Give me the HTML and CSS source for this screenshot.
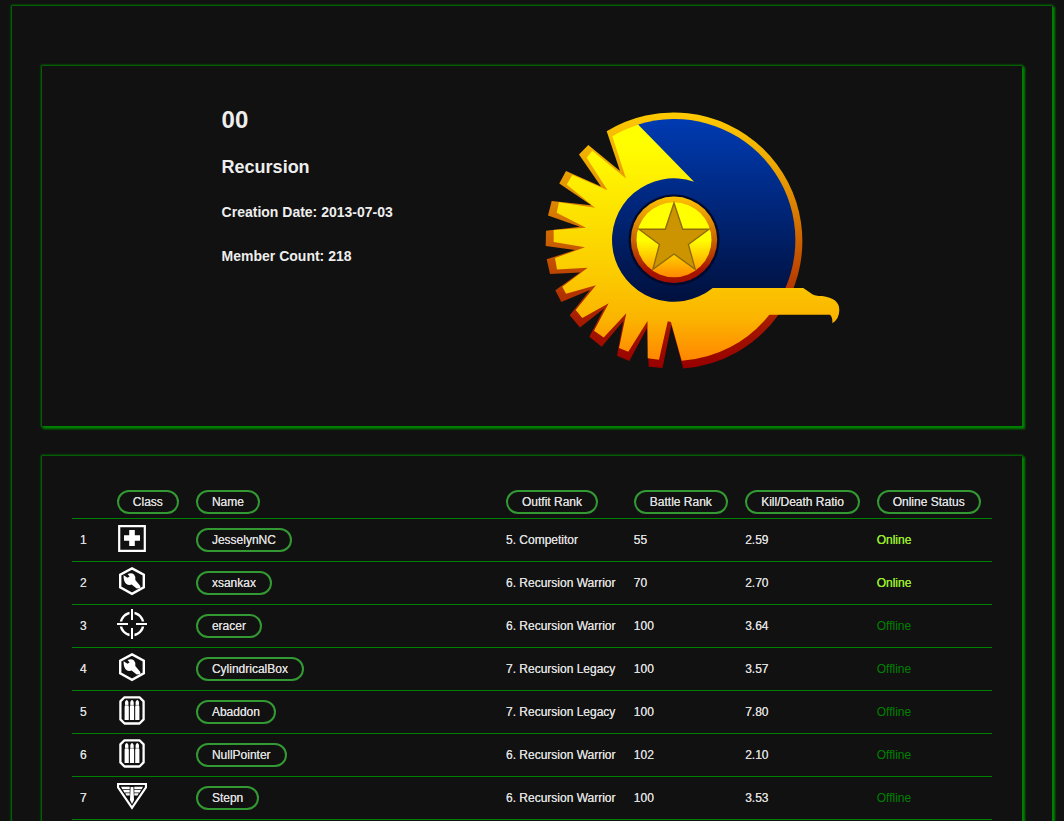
FILE: index.html
```html
<!DOCTYPE html>
<html lang="en">
<head>
<meta charset="utf-8">
<title>Recursion</title>
<link rel="stylesheet" href="styles.css">
</head>
<body>
<svg class="sprites" aria-hidden="true">
  <symbol id="medic" viewBox="0 0 30 30"><path d="M2.2 3.2H27.8V27.8H2.2Z" fill="none" stroke="#fff" stroke-width="2.2"/><path d="M12.2 7H17.8V12.2H23V17.8H17.8V23H12.2V17.8H7V12.2H12.2Z" fill="#fff"/></symbol>
  <symbol id="engineer" viewBox="0 0 30 30"><path d="M15 2.4L26.8 8.7V21.3L15 27.8L3.2 21.3V8.7Z" fill="none" stroke="#fff" stroke-width="2.4"/><path d="M6.6 9.2L10.5 11.8L12.6 10.6L10.6 8Q14.5 6.4 17 8.4Q19 10.6 18.3 14L23.3 20V22.2L19.7 22.6L14.6 18.6Q11.5 19.6 8.8 17.4Q6.4 15 6.6 9.2Z" fill="#fff"/></symbol>
  <symbol id="infiltrator" viewBox="0 0 30 30"><circle cx="15" cy="15" r="11.3" fill="none" stroke="#fff" stroke-width="2.4"/><path d="M15 0V11M15 19V30M0 15H11M19 15H30" stroke="#111" stroke-width="5"/><path d="M15 0V11M15 19V30M0 15H11M19 15H30" stroke="#fff" stroke-width="2"/></symbol>
  <symbol id="heavy" viewBox="0 0 30 30"><path d="M7.5 2.3H22.5L26.6 6.4V24.4L22.5 28.5H7.5L3.4 24.4V6.4Z" fill="none" stroke="#fff" stroke-width="2.3" stroke-linejoin="round"/><path d="M8 10V7Q9.7 3 11.4 7V10L11.8 12V25H7.6V12ZM13.3 10V7Q15 3 16.7 7V10L17.1 12V25H12.9V12ZM18.6 10V7Q20.3 3 22 7V10L22.4 12V25H18.2V12Z" fill="#fff"/><path d="M7 10.3H23" stroke="#111" stroke-opacity=".4"/></symbol>
  <symbol id="light" viewBox="0 0 30 30"><path d="M1 3H29V6.3L15 26.8L1 6.3Z" fill="none" stroke="#fff" stroke-width="2.2"/><path d="M13.6 6H16.4L17 19L15 23L13 19ZM4 5.8H12.7V8.2H5.3ZM6 9H12.7V11.4H7.3ZM8.2 12.2H12.7V14.6H9.5ZM26 5.8H17.3V8.2H24.7ZM24 9H17.3V11.4H22.7ZM21.8 12.2H17.3V14.6H20.5Z" fill="#fff"/></symbol>
</svg>
<main class="page">
  <section class="panel outfit">
    <div class="facts">
      <h1>00</h1>
      <h2>Recursion</h2>
      <h3>Creation Date: 2013-07-03</h3>
      <h3>Member Count: 218</h3>
    </div>
    <svg class="emblem" viewBox="542 96 300 300" role="img" aria-label="New Conglomerate emblem">
      <defs>
        <linearGradient id="rim" gradientUnits="userSpaceOnUse" x1="0" y1="111" x2="0" y2="368"><stop offset="0" stop-color="#fc0"/><stop offset=".22" stop-color="#eda500"/><stop offset=".5" stop-color="#cc6200"/><stop offset=".85" stop-color="#a21400"/><stop offset="1" stop-color="#980000"/></linearGradient>
        <linearGradient id="gold" gradientUnits="userSpaceOnUse" x1="0" y1="140" x2="0" y2="362"><stop offset="0" stop-color="#ff0"/><stop offset=".6" stop-color="#fbcb00"/><stop offset=".8" stop-color="#fbb500"/><stop offset="1" stop-color="#ff8500"/></linearGradient>
        <linearGradient id="blue" gradientUnits="userSpaceOnUse" x1="0" y1="118" x2="0" y2="302"><stop offset="0" stop-color="#003bb3"/><stop offset="1" stop-color="#00103d"/></linearGradient>
        <linearGradient id="hub" gradientUnits="userSpaceOnUse" x1="0" y1="196" x2="0" y2="283"><stop offset="0" stop-color="#ffc400"/><stop offset=".5" stop-color="#cc6600"/><stop offset=".85" stop-color="#aa1400"/><stop offset="1" stop-color="#a01000"/></linearGradient>
        <linearGradient id="disc" gradientUnits="userSpaceOnUse" x1="0" y1="202" x2="0" y2="278"><stop offset="0" stop-color="#ff0"/><stop offset=".5" stop-color="#ff0"/><stop offset="1" stop-color="#ff8500"/></linearGradient>
      </defs>
      <path fill="url(#rim)" d="M606.7 131.3A128.7 128.7 0 0 1 786 304L778.5 314.7A128.7 128.7 0 0 1 683.3 368.4L671.3 325L662.5 368L648.7 366.8L647 328L629.3 360.9L617 355.7L623.3 321L601.7 346.8L589.3 336.7L604 308.5L580 327.4L569.7 315.3L590 290L561.3 302.1L555.3 290.3L580 272.5L550 274L546.7 259.3L575 250L545.7 245.9L546 230.7L580 226.8L548 215.4L551.7 201L591.3 205.2L559.3 183.5L566 171L601 186.5L579 154.5L588.3 145L620 171Z"/>
      <path fill="url(#blue)" d="M638.3 124.5A121 121 0 0 1 785 289L740 300H700L674 240L650 180Z"/>
      <circle cx="674" cy="240" r="62.5" fill="url(#blue)"/>
      <path fill="url(#gold)" d="M612.3 136.3A121 121 0 0 1 638.3 124.8L694 181.8A61.7 61.7 0 1 0 712.7 287.9H803.3L812 294Q815 296 822 296Q839.3 298 839.3 310Q839.3 319 832.3 323.3Q832.8 317 830 314.7H769.3A121 121 0 0 1 681.7 360.8L670.9 322L667.7 321.3L659 359.8L647.7 358.3L647.5 321L628.3 351.8L619 348L626.3 313.3L603.7 337.4L594 330.7L608.7 303.3L582.3 318L575.7 310L596 285.3L566 293.8L562.3 286.7L587.7 267.7L557 269.4L555 258L585 247.3L553.7 242V230L586 227.7L556.7 212.8L559 202.2L595 207.8L566.7 184.4L572.3 175L607.5 190.2L586.7 157.7L592.3 150.7L626 178.4Z"/>
      <circle cx="674" cy="240" r="45.5" fill="#000a2c"/>
      <circle cx="674" cy="239.8" r="43.2" fill="url(#hub)"/>
      <circle cx="674" cy="239.8" r="37.5" fill="url(#disc)"/>
      <path d="M674 203L682.7 229.3H709L688.4 244.5L695.2 269.2L674 254L652.9 269.2L659.4 244.5L639 229.3H665.3Z" fill="#cc9400" stroke="#8f6b0c" stroke-width="1.4"/>
    </svg>
  </section>
  <section class="panel">
    <table class="members">
      <colgroup><col class="c-num"><col class="c-class"><col class="c-name"><col class="c-outfit"><col class="c-battle"><col class="c-ratio"><col class="c-status"></colgroup>
      <thead>
        <tr><td></td><th><button class="pill">Class</button></th><th><button class="pill">Name</button></th><th><button class="pill">Outfit Rank</button></th><th><button class="pill">Battle Rank</button></th><th><button class="pill">Kill/Death Ratio</button></th><th><button class="pill">Online Status</button></th></tr>
      </thead>
      <tbody>
        <tr><td>1</td><td><svg class="icon"><use href="#medic"/></svg></td><td><a class="pill" href="#">JesselynNC</a></td><td>5. Competitor</td><td>55</td><td>2.59</td><td class="online">Online</td></tr>
        <tr><td>2</td><td><svg class="icon"><use href="#engineer"/></svg></td><td><a class="pill" href="#">xsankax</a></td><td>6. Recursion Warrior</td><td>70</td><td>2.70</td><td class="online">Online</td></tr>
        <tr><td>3</td><td><svg class="icon"><use href="#infiltrator"/></svg></td><td><a class="pill" href="#">eracer</a></td><td>6. Recursion Warrior</td><td>100</td><td>3.64</td><td class="offline">Offline</td></tr>
        <tr><td>4</td><td><svg class="icon"><use href="#engineer"/></svg></td><td><a class="pill" href="#">CylindricalBox</a></td><td>7. Recursion Legacy</td><td>100</td><td>3.57</td><td class="offline">Offline</td></tr>
        <tr><td>5</td><td><svg class="icon"><use href="#heavy"/></svg></td><td><a class="pill" href="#">Abaddon</a></td><td>7. Recursion Legacy</td><td>100</td><td>7.80</td><td class="offline">Offline</td></tr>
        <tr><td>6</td><td><svg class="icon"><use href="#heavy"/></svg></td><td><a class="pill" href="#">NullPointer</a></td><td>6. Recursion Warrior</td><td>102</td><td>2.10</td><td class="offline">Offline</td></tr>
        <tr><td>7</td><td><svg class="icon"><use href="#light"/></svg></td><td><a class="pill" href="#">Stepn</a></td><td>6. Recursion Warrior</td><td>100</td><td>3.53</td><td class="offline">Offline</td></tr>
      </tbody>
    </table>
  </section>
</main>
</body>
</html>
```

FILE: styles.css
```css
* {
  box-sizing: border-box;
}

html {
  background: #111;
  scrollbar-width: none;
}

body {
  margin: 0;
  padding: 6px 12px;
  color: #eee;
  font: 12px/16px "Liberation Sans", Arial, sans-serif;
}

.sprites {
  display: none;
}

.page,
.panel {
  box-shadow: 2px 2px 2px 1px #008000, 0 0 2px 1px #008000;
}

.page {
  padding: 60px 30px 30px;
}

.panel {
  padding: 30px;
}

.panel + .panel {
  margin-top: 30px;
}

.outfit {
  display: flex;
  justify-content: space-evenly;
}

.facts {
  padding-top: 10px;
}

.facts h1,
.facts h2,
.facts h3 {
  margin: 0 0 28px;
  font-size: 14px;
  line-height: 16px;
}

.facts h1 {
  margin-bottom: 23px;
  font-size: 24px;
  line-height: 28px;
}

.facts h2 {
  margin-bottom: 27px;
  font-size: 18px;
  line-height: 20px;
}

.emblem {
  width: 300px;
  height: 300px;
}

.members {
  width: 100%;
  table-layout: fixed;
  border-collapse: separate;
  border-spacing: 0;
  color: #ddd;
  text-shadow: 0 0 0 currentColor;
}

.c-num { width: 4%; }
.c-class { width: 8.6%; }
.c-name { width: 33.7%; }
.c-outfit { width: 13.9%; }
.c-battle { width: 12.1%; }
.c-ratio { width: 14.3%; }
.c-status { width: 13.4%; }

.members th,
.members td {
  padding: 4px 8px;
  border-bottom: 1px solid #008000;
  font-weight: 400;
  text-align: left;
  vertical-align: middle;
  white-space: nowrap;
}

.icon {
  display: block;
  width: 30px;
  height: 30px;
  margin-bottom: 4px;
}

.pill {
  display: block;
  width: fit-content;
  padding: 2px 14px;
  border: 2px solid #393;
  border-radius: 12px;
  background: transparent;
  color: #ddd;
  font: inherit;
  text-decoration: none;
  text-shadow: inherit;
}

.members .online {
  color: #9be82b;
  text-shadow: 0 0 0 currentColor;
}

.members .offline {
  color: #008000;
  text-shadow: none;
}
```
